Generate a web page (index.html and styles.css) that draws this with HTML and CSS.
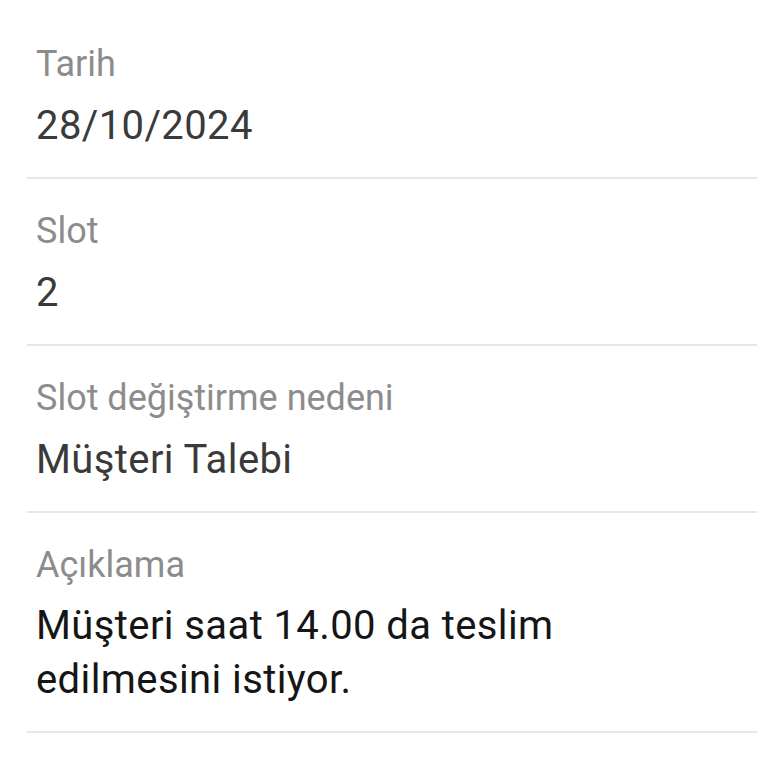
FILE: index.html
```html
<!DOCTYPE html>
<html>
<head>
    <title>Slot Detay</title>
    <meta charset="UTF-8">
    <link rel="stylesheet" href="styles.css">
</head>
<body>
    <div class="details">
        <div class="field">
            <div class="label">Tarih</div>
            <div class="value">28/10/2024</div>
        </div>
        <div class="field">
            <div class="label">Slot</div>
            <div class="value">2</div>
        </div>
        <div class="field">
            <div class="label">Slot değiştirme nedeni</div>
            <div class="value">Müşteri Talebi</div>
        </div>
        <div class="field">
            <div class="label">Açıklama</div>
            <div class="value note">Müşteri saat 14.00 da teslim edilmesini istiyor.</div>
        </div>
    </div>
</body>
</html>
```

FILE: styles.css
```css
body {
    margin: 0;
    background-color: #fff;
    font-family: Roboto, "Noto Sans", sans-serif;
}

/* list of read-only fields */
.details {
    margin: 12px 11px 0 27px;
}

.field {
    padding: 30px 0 24px 9px;
    border-bottom: 2px solid #e6e6e6;
}

.label {
    font-size: 36px;
    line-height: 44px;
    color: #8c8c8c;
    margin-bottom: 12px;
}

.value {
    font-size: 40px;
    line-height: 55px;
    letter-spacing: 0.4px;
    color: #3a3a3a;
}

/* long text wraps inside a narrower column */
.note {
    color: #151515;
    line-height: 54px;
    max-width: 540px;
}
```
